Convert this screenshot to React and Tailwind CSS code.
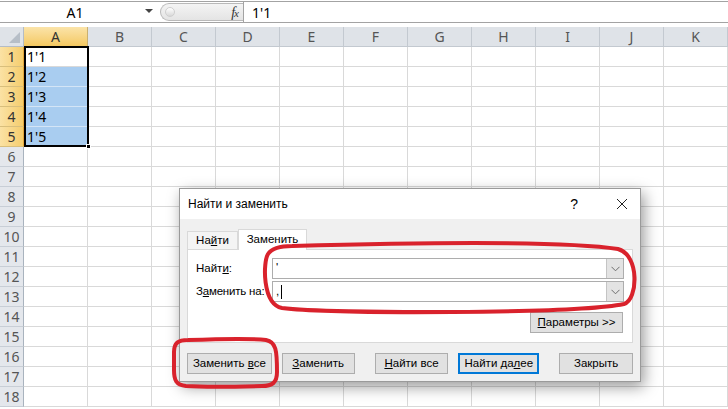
import React from "react";

const cols = ["A", "B", "C", "D", "E", "F", "G", "H", "I", "J", "K"];
const rows = Array.from({ length: 18 }, (_, i) => i + 1);
const data = { 1: "1'1", 2: "1'2", 3: "1'3", 4: "1'4", 5: "1'5" };

function U({ children }) {
  return <span className="underline underline-offset-[1px]">{children}</span>;
}

function Chevron() {
  return (
    <div className="w-[17px] h-full bg-[#e3e3e3] border-l border-[#c4c4c4] flex items-center justify-center">
      <svg width="9" height="6" viewBox="0 0 9 6">
        <path d="M0.5 0.8 L4.5 4.8 L8.5 0.8" fill="none" stroke="#6d6d6d" strokeWidth="1" />
      </svg>
    </div>
  );
}

function Btn({ children, focus, className = "" }) {
  return (
    <div
      className={`h-[21px] flex items-center justify-center bg-[#e1e1e1] text-[11.5px] text-black ${
        focus ? "border-2 border-[#0078d7]" : "border border-[#adadad]"
      } ${className}`}
    >
      <span className="whitespace-nowrap">{children}</span>
    </div>
  );
}

function FormulaBar() {
  return (
    <div className="h-[27px] pt-px">
      <div className="h-[22px] border-y border-[#a3a3a3] flex items-stretch">
        <div className="w-[160px] flex items-center relative">
          <span className="flex-1 text-center pr-[10px] text-[14px] text-black">A1</span>
          <span className="absolute left-[145px] top-[7px] w-0 h-0 border-x-[4px] border-x-transparent border-t-[4px] border-t-[#444]" />
        </div>
        <div className="w-[83px] my-[1px] rounded-l-full border border-r-0 border-[#b9b9b9] bg-gradient-to-b from-[#f4f4f4] to-[#e4e4e4] flex items-center justify-between pl-[4px] pr-[5px]">
          <span className="w-[10px] h-[10px] rounded-full bg-gradient-to-b from-[#ffffff] to-[#d8d8d8] border border-[#cfcfcf]" />
          <span className="font-['Liberation_Serif',serif] italic text-[14px] text-[#333] tracking-[-1px]">
            f<span className="text-[11px]">x</span>
          </span>
        </div>
        <div className="flex-1 border-l border-[#a3a3a3] flex items-center pl-[8px] text-[14px] text-black">1'1</div>
      </div>
    </div>
  );
}

function Sheet() {
  return (
    <div className="relative">
      <div className="grid grid-cols-[24px_repeat(11,64px)] auto-rows-[20px]">
        <div className="bg-[#dfe3e8] border-r border-b border-[#b4bcc6] relative">
          <span className="absolute right-[3px] bottom-[3px] w-0 h-0 border-l-[11px] border-l-transparent border-b-[11px] border-b-[#b6bec7]" />
        </div>
        {cols.map((c) => (
          <div
            key={c}
            className={`flex items-center justify-center text-[14px] border-r border-b ${
              c === "A"
                ? "bg-gradient-to-b from-[#fbe4a9] to-[#f4c860] border-r-[#c9b071] border-b-[#e3a53a] text-[#333]"
                : "bg-[#dfe3e8] border-[#c3c9d0] text-[#555]"
            }`}
          >
            {c}
          </div>
        ))}
        {rows.map((r) => (
          <React.Fragment key={r}>
            <div
              className={`flex items-center justify-center text-[14px] border-r border-b ${
                r <= 5
                  ? "bg-gradient-to-r from-[#fbe2a4] to-[#f5cd6c] border-r-[#e3a53a] border-b-[#d9bf7c] text-[#333]"
                  : "bg-[#e4e7ec] border-r-[#a9b3be] border-b-[#c8ced6] text-[#555]"
              }`}
            >
              {r}
            </div>
            {cols.map((c) => (
              <div
                key={c}
                className={`border-r border-b flex items-center pl-[3px] text-[14px] text-black ${
                  c === "A" && r >= 2 && r <= 5
                    ? "bg-[#a9cdf0] border-[#d4e5f6]"
                    : "bg-white border-[#d9d9d9]"
                }`}
              >
                {c === "A" && data[r] ? data[r] : ""}
              </div>
            ))}
          </React.Fragment>
        ))}
      </div>
      <div className="absolute left-[24px] top-[19px] w-[65px] h-[101px] border-2 border-black" />
      <div className="absolute left-[86px] top-[117px] w-[5px] h-[5px] bg-black border border-white" />
    </div>
  );
}

function Dialog() {
  return (
    <div className="absolute left-[179px] top-[188px] w-[462px] h-[194px] border border-[#9a9a9a] bg-[#f0f0f0] shadow-[3px_5px_14px_rgba(0,0,0,0.4)] flex flex-col text-[11.5px] text-black font-['Liberation_Sans',sans-serif]">
      <div className="h-[30px] bg-white flex items-center pl-[8px] pr-[12px]">
        <span className="flex-1 text-[12px]">Найти и заменить</span>
        <span className="text-[14px] mr-[38px]">?</span>
        <svg width="12" height="12" viewBox="0 0 12 12">
          <path d="M1 1 L11 11 M11 1 L1 11" stroke="#222" strokeWidth="1" />
        </svg>
      </div>
      <div className="px-[7px] pt-[9px]">
        <div className="flex items-end h-[21px]">
          <div className="w-[51px] h-[18px] border border-b-0 border-[#d9d9d9] bg-[#f4f4f4] flex items-center justify-center">
            <span>
              На<U>й</U>ти
            </span>
          </div>
          <div className="w-[69px] h-[21px] border border-b-0 border-[#d9d9d9] bg-white flex items-center justify-center relative top-px">
            <span>
              Заменит<U>ь</U>
            </span>
          </div>
        </div>
        <div className="h-[94px] border border-[#d9d9d9] bg-white px-[8px] pt-[8px] flex flex-col">
          <div className="flex items-center h-[21px]">
            <span className="w-[76px] shrink-0 whitespace-nowrap">
              Найт<U>и</U>:
            </span>
            <div className="flex-1 h-[21px] border border-[#adadad] bg-white flex items-stretch">
              <span className="flex-1 pl-[3px] leading-[16px]">'</span>
              <Chevron />
            </div>
          </div>
          <div className="flex items-center h-[21px] mt-[2px]">
            <span className="w-[76px] shrink-0 whitespace-nowrap tracking-[-0.2px]">
              З<U>а</U>менить на:
            </span>
            <div className="flex-1 h-[21px] border border-[#adadad] bg-white flex items-stretch">
              <span className="flex-1 pl-[3px] flex items-center">
                ,<span className="w-px h-[14px] bg-black ml-[2px]" />
              </span>
              <Chevron />
            </div>
          </div>
          <div className="flex justify-end mt-[10px]">
            <Btn className="w-[93px] mr-px">
              <U>П</U>араметры &gt;&gt;
            </Btn>
          </div>
        </div>
        <div className="flex mt-[10px]">
          <Btn className="w-[85px]">
            Заменить <U>в</U>се
          </Btn>
          <Btn className="w-[73px] ml-[10px]">
            <U>З</U>аменить
          </Btn>
          <Btn className="w-[74px] ml-[20px]">
            <U>Н</U>айти все
          </Btn>
          <Btn focus className="w-[81px] ml-[10px]">
            Найти да<U>л</U>ее
          </Btn>
          <Btn className="w-[74px] ml-[20px]">Закрыть</Btn>
        </div>
      </div>
    </div>
  );
}

export default function App() {
  return (
    <div className="relative w-[728px] h-[409px] overflow-hidden bg-white font-['Noto_Sans',sans-serif]">
      <FormulaBar />
      <Sheet />
      <Dialog />
      <svg className="absolute inset-0 pointer-events-none" width="728" height="409">
        <path
          d="M292 246 C400 243 560 240 618 249 C640 255 638 300 624 304 C575 314 330 314 282 308 C262 304 263 262 268 254 C272 248 281 246 292 246 Z"
          fill="none"
          stroke="#d9222c"
          strokeWidth="4"
        />
        <path
          d="M188 340 C215 339 250 338 266 340 C276 342 277 350 277 372 C277 383 272 386 262 386 C230 387 200 387 186 386 C176 385 174 380 174 370 L174 352 C174 343 178 340 188 340 Z"
          fill="none"
          stroke="#d9222c"
          strokeWidth="4"
        />
      </svg>
    </div>
  );
}
